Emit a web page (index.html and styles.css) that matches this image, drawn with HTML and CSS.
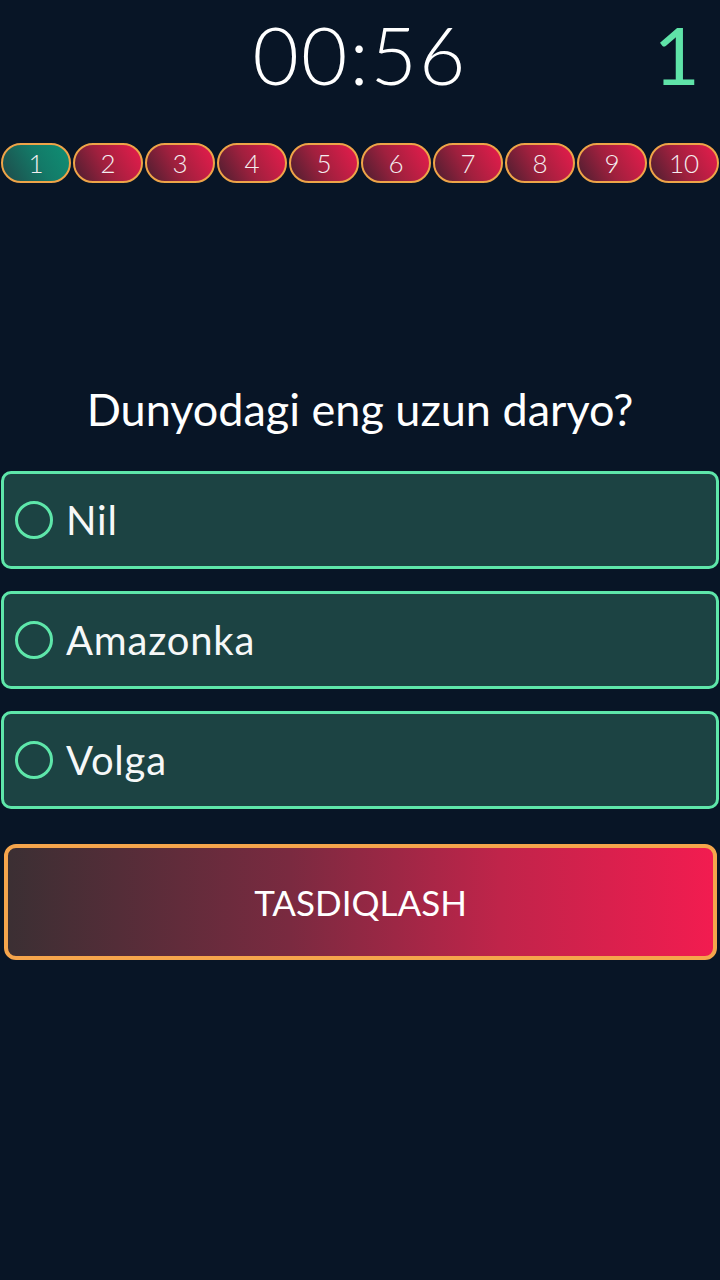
FILE: index.html
```html
<!DOCTYPE html>
<html>
<head>
<meta charset="utf-8">
<link rel="stylesheet" href="styles.css">
</head>
<body>
<div class="screen">
  <div class="header">
    <div></div>
    <div class="timer">00:56</div>
    <div class="score">1</div>
  </div>
  <div class="pills">
    <div class="pill current">1</div>
    <div class="pill">2</div>
    <div class="pill">3</div>
    <div class="pill">4</div>
    <div class="pill">5</div>
    <div class="pill">6</div>
    <div class="pill">7</div>
    <div class="pill">8</div>
    <div class="pill">9</div>
    <div class="pill">10</div>
  </div>
  <div class="question">Dunyodagi eng uzun daryo?</div>
  <div class="options">
    <div class="option"><span class="radio"></span><span class="label">Nil</span></div>
    <div class="option"><span class="radio"></span><span class="label">Amazonka</span></div>
    <div class="option"><span class="radio"></span><span class="label">Volga</span></div>
  </div>
  <div class="confirm">TASDIQLASH</div>
</div>
</body>
</html>
```

FILE: styles.css
```css
html, body {
  margin: 0;
  padding: 0;
  background: #081526;
}
.screen {
  width: 720px;
  height: 1280px;
  background: #081526;
  font-family: Lato, "Open Sans", sans-serif;
  color: #ffffff;
  overflow: hidden;
}
.header {
  display: grid;
  grid-template-columns: 1fr auto 1fr;
  align-items: start;
  height: 143px;
}
.timer {
  font-size: 80px;
  line-height: 1;
  padding-top: 14px;
  letter-spacing: 2px;
  font-weight: 300;
}
.score {
  justify-self: end;
  padding-right: 20px;
  padding-top: 14px;
  font-size: 80px;
  line-height: 1;
  font-weight: 400;
  color: #5fe3a8;
}
.pills {
  display: flex;
  gap: 2px;
  padding: 0 1px;
}
.pill {
  flex: 1;
  height: 36px;
  border: 2px solid #eea448;
  border-radius: 20px;
  background: linear-gradient(60deg, #4a1f30 0%, #a0203e 45%, #e81c4c 100%);
  display: flex;
  align-items: center;
  justify-content: center;
  font-size: 26px;
  font-weight: 300;
  color: #f4eef0;
}
.pill.current {
  background: linear-gradient(60deg, #1f4a4a 0%, #137a68 55%, #0f8f74 100%);
}
.question {
  margin-top: 200px;
  text-align: center;
  font-size: 45px;
  line-height: 52px;
  height: 52px;
}
.options {
  margin-top: 36px;
  display: flex;
  flex-direction: column;
  gap: 22px;
  padding: 0 1px;
}
.option {
  height: 92px;
  border: 3px solid #5ee6aa;
  border-radius: 10px;
  background: #1c4343;
  display: flex;
  align-items: center;
  padding-left: 11px;
}
.radio {
  width: 32px;
  height: 32px;
  border: 3.5px solid #5ee6aa;
  border-radius: 50%;
  box-sizing: content-box;
  flex: none;
}
.label {
  margin-left: 13px;
  font-size: 40px;
  letter-spacing: 0.8px;
  color: #f6f8f8;
}
.confirm {
  margin: 35px 3px 0 4px;
  height: 108px;
  border: 4px solid #f5a54c;
  border-radius: 12px;
  background: linear-gradient(90deg, #3b2f33 0%, #7a2a40 40%, #c0244a 70%, #f21c50 100%);
  display: flex;
  align-items: center;
  justify-content: center;
  font-size: 35px;
  color: #ffffff;
}
```
